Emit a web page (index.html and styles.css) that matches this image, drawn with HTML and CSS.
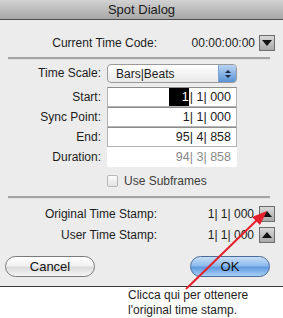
FILE: index.html
```html
<!DOCTYPE html>
<html lang="it">
<head>
  <meta charset="UTF-8">
  <title>Spot Dialog</title>
  <link rel="stylesheet" href="styles.css">
</head>
<body>
  <div class="window">
    <div class="titlebar">Spot Dialog</div>

    <div class="dialog">
      <!-- Current time code -->
      <div class="stamp-row tc-row">
        <span class="stamp-label">Current Time Code:</span>
        <span class="stamp-value">00:00:00:00</span>
        <span class="arrow-btn"><span class="tri-down"></span></span>
      </div>

      <div class="sep"></div>

      <!-- Location fields -->
      <div class="fields">
        <label class="field-label">Time Scale:</label>
        <div class="popup">
          <span class="popup-text">Bars|Beats</span>
          <span class="stepper"><span class="st-up"></span><span class="st-down"></span></span>
        </div>

        <label class="field-label">Start:</label>
        <div class="field"><span class="sel">1</span>| 1| 000</div>

        <label class="field-label">Sync Point:</label>
        <div class="field">1| 1| 000</div>

        <label class="field-label">End:</label>
        <div class="field">95| 4| 858</div>

        <label class="field-label">Duration:</label>
        <div class="field field-off">94| 3| 858</div>
      </div>

      <div class="check-row">
        <span class="checkbox"></span>
        <span class="check-label">Use Subframes</span>
      </div>

      <div class="sep sep-low"></div>

      <!-- Time stamps -->
      <div class="stamp-row first-stamp">
        <span class="stamp-label">Original Time Stamp:</span>
        <span class="stamp-value">1| 1| 000</span>
        <span class="arrow-btn"><span class="tri-up"></span></span>
      </div>
      <div class="stamp-row">
        <span class="stamp-label">User Time Stamp:</span>
        <span class="stamp-value">1| 1| 000</span>
        <span class="arrow-btn"><span class="tri-up"></span></span>
      </div>

      <div class="buttons">
        <button class="btn btn-cancel">Cancel</button>
        <button class="btn btn-ok">OK</button>
      </div>
    </div>

    <p class="caption">Clicca qui per ottenere<br>l'original time stamp.</p>

    <!-- Red annotation arrow -->
    <svg class="annotation" width="283" height="318" viewBox="0 0 283 318">
      <line x1="186" y1="289" x2="258" y2="219" stroke="#e3202c" stroke-width="2"/>
      <polygon points="267,211 252,217 260,225" fill="#e3202c"/>
    </svg>
  </div>
</body>
</html>
```

FILE: styles.css
```css
/* Reset */
* {
  box-sizing: border-box;
  margin: 0;
  padding: 0;
}
body {
  font-family: "Liberation Sans", Arial, sans-serif;
  font-size: 12px;
  color: #1c1c1c;
  background-color: #fff;
}
.window {
  position: relative;
  width: 283px;
  height: 318px;
  overflow: hidden;
}
/* Title bar */
.titlebar {
  height: 20px;
  line-height: 19px;
  text-align: center;
  font-size: 13px;
  color: #1a1a1a;
  background: linear-gradient(#d2d2d2, #a7a7a7);
  border-bottom: 1px solid #4e4e4e;
}
/* Dialog body */
.dialog {
  background-color: #ececec;
  padding: 13px 8px 9px 8px;
  border-bottom: 1px solid #3a3a3a;
}
.sep {
  height: 3px;
  margin: 4px 5px 0 0;
  background-color: #a4a4a4;
  border-bottom: 1px solid #e2e2e2;
}
.sep-low {
  margin-top: 8px;
}
/* Label / value rows with small arrow buttons */
.stamp-row {
  display: flex;
  align-items: center;
  height: 20px;
  margin-top: 1px;
}
.tc-row {
  margin-top: 0;
}
.first-stamp {
  margin-top: 5px;
}
.stamp-label {
  width: 149px;
  text-align: right;
}
.stamp-value {
  flex: 1;
  text-align: right;
}
.arrow-btn {
  display: flex;
  align-items: center;
  justify-content: center;
  width: 16px;
  height: 16px;
  margin-left: 5px;
  border: 1px solid #6e6e6e;
  background: linear-gradient(#d8d8d8, #a9a9a9);
}
.tc-row .arrow-btn {
  margin-left: 4px;
}
.tri-down {
  width: 0;
  height: 0;
  border-left: 5px solid transparent;
  border-right: 5px solid transparent;
  border-top: 6px solid #111;
}
.tri-up {
  width: 0;
  height: 0;
  border-left: 5px solid transparent;
  border-right: 5px solid transparent;
  border-bottom: 6px solid #111;
}
/* Fields grid */
.fields {
  display: grid;
  grid-template-columns: 93px 130px;
  grid-template-rows: 23px repeat(4, 20px);
  column-gap: 6px;
  margin-top: 4px;
}
.fields .popup {
  margin-bottom: 4px;
}
.field-label {
  align-self: center;
  text-align: right;
  font-size: 12px;
}
.fields .field-label:first-child {
  align-self: start;
  line-height: 19px;
}
.popup {
  display: flex;
  align-items: center;
  height: 19px;
  border: 1px solid #9a9a9a;
  border-radius: 4px;
  background: linear-gradient(#ffffff, #e9e9e9);
  overflow: hidden;
}
.popup-text {
  flex: 1;
  padding-left: 8px;
  font-size: 12px;
}
.stepper {
  display: flex;
  flex-direction: column;
  align-items: center;
  justify-content: center;
  gap: 2px;
  width: 18px;
  height: 100%;
  background: linear-gradient(#b9d4f2, #5b93d6);
  border-left: 1px solid #7fa4cf;
}
.st-up {
  border-left: 3px solid transparent;
  border-right: 3px solid transparent;
  border-bottom: 3px solid #1b2a44;
}
.st-down {
  border-left: 3px solid transparent;
  border-right: 3px solid transparent;
  border-top: 3px solid #1b2a44;
}
.field {
  height: 20px;
  line-height: 18px;
  padding-right: 5px;
  text-align: right;
  font-size: 12.5px;
  background-color: #fff;
  border: 1px solid #b4b4b4;
  border-top-color: #8c8c8c;
}
.sel {
  display: inline-block;
  width: 20px;
  background-color: #000;
  color: #fff;
  text-align: right;
  margin-right: 1px;
}
.field-off {
  border-color: #fff;
  color: #8a8a8a;
}
/* Checkbox */
.check-row {
  display: flex;
  align-items: center;
  height: 14px;
  margin-top: 7px;
  padding-left: 99px;
}
.checkbox {
  width: 11px;
  height: 12px;
  border: 1px solid #b8b8b8;
  border-radius: 2px;
  background: linear-gradient(#fbfbfb, #e4e4e4);
}
.check-label {
  margin-left: 6px;
  color: #3c3c3c;
}
/* Buttons */
.buttons {
  display: flex;
  justify-content: space-between;
  margin-top: 11px;
  padding-right: 5px;
}
.btn {
  height: 21px;
  border-radius: 11px;
  font-family: "Liberation Sans", Arial, sans-serif;
  font-size: 13px;
  color: #111;
  cursor: pointer;
}
.btn-cancel {
  width: 90px;
  margin-left: -3px;
  border: 1px solid #7a7a7a;
  background: linear-gradient(#ffffff 0%, #f1f1f1 45%, #dcdcdc 55%, #f4f4f4 100%);
}
.btn-ok {
  width: 80px;
  border: 1px solid #4a6c9b;
  background: linear-gradient(#c9def5 0%, #8dbbee 45%, #5f9be0 55%, #a9d0f6 100%);
}
/* Caption */
.caption {
  padding: 1px 0 0 128px;
  font-size: 12px;
  line-height: 15px;
  color: #1e1e1e;
}
/* Annotation overlay */
.annotation {
  position: absolute;
  left: 0;
  top: 0;
  pointer-events: none;
}
```
